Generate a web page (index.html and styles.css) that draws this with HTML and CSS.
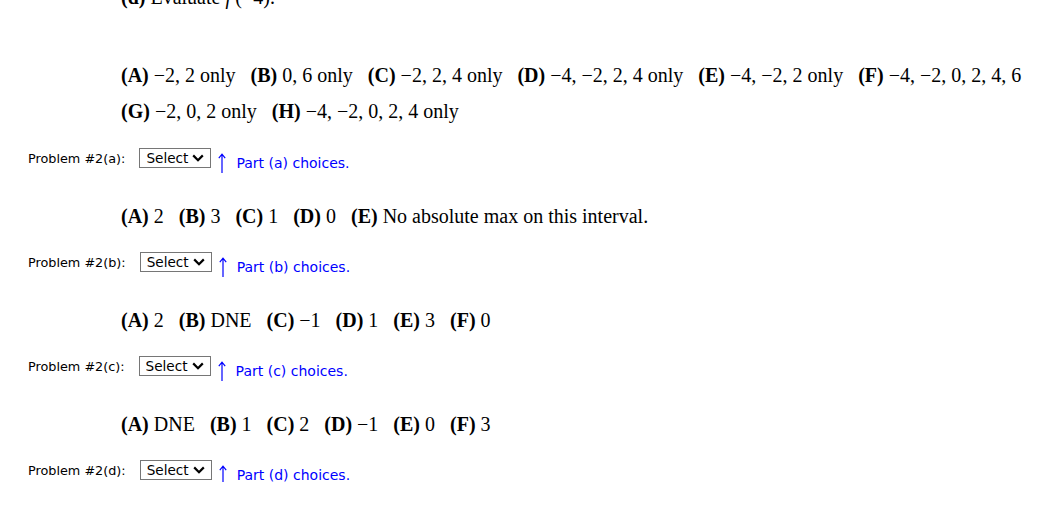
FILE: index.html
```html
<!DOCTYPE html>
<html>
<head>
<meta charset="utf-8">
<title>Problem 2</title>
<link rel="stylesheet" href="styles.css">
</head>
<body>
<div class="page">
  <div class="prev-line"><b>(d)</b> Evaluate <i>f</i>′(−4).</div>

  <div class="choices first">
    <span class="opt"><b>(A)</b> −2, 2 only</span>
    <span class="opt"><b>(B)</b> 0, 6 only</span>
    <span class="opt"><b>(C)</b> −2, 2, 4 only</span>
    <span class="opt"><b>(D)</b> −4, −2, 2, 4 only</span>
    <span class="opt"><b>(E)</b> −4, −2, 2 only</span>
    <span class="opt"><b>(F)</b> −4, −2, 0, 2, 4, 6</span>
    <span class="opt"><b>(G)</b> −2, 0, 2 only</span>
    <span class="opt"><b>(H)</b> −4, −2, 0, 2, 4 only</span>
  </div>
  <div class="answer-row after-first">
    <span class="label">Problem #2(a):</span>
    <select class="pick"><option>Select</option></select>
    <span class="hint"><svg class="arrow" width="8" height="20" viewBox="0 0 8 20"><path d="M4 1.2V20M0.8 5.2L4 1.2L7.2 5.2" fill="none" stroke="#0000ff" stroke-width="1.2"/></svg><span class="hint-text">Part (a) choices.</span></span>
  </div>

  <div class="choices">
    <span class="opt"><b>(A)</b> 2</span>
    <span class="opt"><b>(B)</b> 3</span>
    <span class="opt"><b>(C)</b> 1</span>
    <span class="opt"><b>(D)</b> 0</span>
    <span class="opt"><b>(E)</b> No absolute max on this interval.</span>
  </div>
  <div class="answer-row">
    <span class="label">Problem #2(b):</span>
    <select class="pick"><option>Select</option></select>
    <span class="hint"><svg class="arrow" width="8" height="20" viewBox="0 0 8 20"><path d="M4 1.2V20M0.8 5.2L4 1.2L7.2 5.2" fill="none" stroke="#0000ff" stroke-width="1.2"/></svg><span class="hint-text">Part (b) choices.</span></span>
  </div>

  <div class="choices">
    <span class="opt"><b>(A)</b> 2</span>
    <span class="opt"><b>(B)</b> DNE</span>
    <span class="opt"><b>(C)</b> −1</span>
    <span class="opt"><b>(D)</b> 1</span>
    <span class="opt"><b>(E)</b> 3</span>
    <span class="opt"><b>(F)</b> 0</span>
  </div>
  <div class="answer-row">
    <span class="label">Problem #2(c):</span>
    <select class="pick"><option>Select</option></select>
    <span class="hint"><svg class="arrow" width="8" height="20" viewBox="0 0 8 20"><path d="M4 1.2V20M0.8 5.2L4 1.2L7.2 5.2" fill="none" stroke="#0000ff" stroke-width="1.2"/></svg><span class="hint-text">Part (c) choices.</span></span>
  </div>

  <div class="choices">
    <span class="opt"><b>(A)</b> DNE</span>
    <span class="opt"><b>(B)</b> 1</span>
    <span class="opt"><b>(C)</b> 2</span>
    <span class="opt"><b>(D)</b> −1</span>
    <span class="opt"><b>(E)</b> 0</span>
    <span class="opt"><b>(F)</b> 3</span>
  </div>
  <div class="answer-row">
    <span class="label">Problem #2(d):</span>
    <select class="pick"><option>Select</option></select>
    <span class="hint"><svg class="arrow" width="8" height="20" viewBox="0 0 8 20"><path d="M4 1.2V20M0.8 5.2L4 1.2L7.2 5.2" fill="none" stroke="#0000ff" stroke-width="1.2"/></svg><span class="hint-text">Part (d) choices.</span></span>
  </div>
</div>
</body>
</html>
```
FILE: styles.css
```css
html, body {
  margin: 0;
  padding: 0;
  background: #ffffff;
}

.page {
  padding-left: 28px;
  color: #000000;
}

.prev-line {
  margin-top: -19px;
  margin-left: 93px;
  font-family: "Liberation Serif", "Times New Roman", serif;
  font-size: 20px;
  line-height: 32px;
}

.choices {
  display: flex;
  flex-wrap: wrap;
  column-gap: 15px;
  margin-left: 93px;
  margin-top: 30px;
  font-family: "Liberation Serif", "Times New Roman", serif;
  font-size: 20px;
  line-height: 32px;
}

.choices.first {
  margin-top: 44px;
  line-height: 36px;
}

.opt {
  white-space: nowrap;
}

.answer-row {
  display: flex;
  align-items: center;
  height: 24px;
  margin-top: 18px;
}

.answer-row.after-first {
  margin-top: 17px;
}

.label {
  font-family: "DejaVu Sans", Verdana, sans-serif;
  font-size: 12.8px;
  margin-right: 14px;
}

.pick {
  -webkit-appearance: none;
  appearance: none;
  font-family: "DejaVu Sans", Verdana, sans-serif;
  font-size: 13.6px;
  width: 72px;
  height: 20px;
  margin: 0;
  padding: 0 0 0 6px;
  border: 1px solid #767676;
  border-radius: 0;
  color: #000000;
  background-color: #ffffff;
  background-image: url("data:image/svg+xml;utf8,<svg xmlns='http://www.w3.org/2000/svg' width='12' height='8' viewBox='0 0 12 8'><path d='M1.2 1.4L6 6.2L10.8 1.4' fill='none' stroke='black' stroke-width='2.2'/></svg>");
  background-repeat: no-repeat;
  background-position: right 6px center;
  background-size: 12px 8px;
}

.hint {
  display: inline-flex;
  align-items: center;
  margin-left: 7px;
  margin-top: 9px;
  color: #0000ff;
  font-family: "DejaVu Sans", Verdana, sans-serif;
  font-size: 14px;
}

.arrow {
  display: block;
  margin-right: 10px;
}
```
